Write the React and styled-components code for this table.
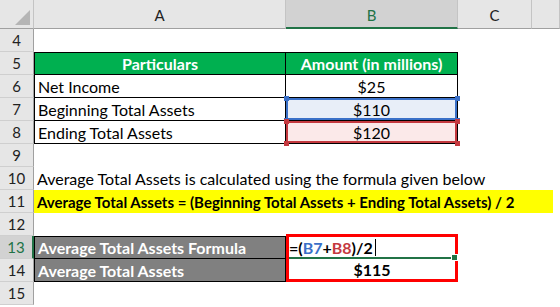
import styled, { createGlobalStyle } from 'styled-components';

const GlobalStyle = createGlobalStyle`
  html, body {
    margin: 0;
    padding: 0;
    background: #ffffff;
  }
  body {
    font-family: Lato, "Open Sans", "Liberation Sans", sans-serif;
    font-size: 16px;
    color: #000;
  }
`;

const Sheet = styled.div`
  display: grid;
  grid-template-columns: 34px 252px 172px 74px 1fr;
  grid-template-rows: 29px repeat(12, 23px);
  width: 560px;
  height: 307px;
  overflow: hidden;
  background: #fff;
`;

const Corner = styled.div`
  background: #e6e6e6;
  border-right: 1px solid #c4c4c4;
  border-bottom: 1px solid #a0a0a0;
  display: flex;
  align-items: flex-end;
  justify-content: flex-end;
  padding: 0 3px 3px 0;
  box-sizing: border-box;
`;

const ColHead = styled.div`
  background: ${(p) => (p.$active ? '#d2d2d2' : '#e6e6e6')};
  color: ${(p) => (p.$active ? '#217346' : '#222')};
  border-right: 1px solid #c4c4c4;
  border-bottom: ${(p) => (p.$active ? '2px solid #217346' : '1px solid #a0a0a0')};
  display: flex;
  align-items: center;
  justify-content: center;
  padding-top: 2px;
  box-sizing: border-box;
  font-size: 15px;
`;

const RowHead = styled.div`
  grid-column: 1;
  background: ${(p) => (p.$active ? '#d2d2d2' : '#e6e6e6')};
  color: ${(p) => (p.$active ? '#217346' : '#222')};
  border-right: ${(p) => (p.$active ? '2px solid #217346' : '1px solid #a0a0a0')};
  border-bottom: 1px solid #cfcfcf;
  display: flex;
  align-items: center;
  justify-content: center;
  box-sizing: border-box;
  font-size: 15px;
`;

const Cell = styled.div`
  grid-column: ${(p) => p.$col || 'auto'};
  background: ${(p) => p.$bg || 'transparent'};
  color: ${(p) => p.$color || '#000'};
  font-weight: ${(p) => (p.$bold ? 700 : 400)};
  font-size: ${(p) => p.$size || 16}px;
  display: flex;
  align-items: center;
  justify-content: ${(p) => (p.$center ? 'center' : 'flex-start')};
  padding: 0 3px;
  white-space: nowrap;
  box-sizing: border-box;
  position: relative;
  ${(p) =>
    p.$boxed &&
    `
    border-right: 1px solid #000;
    border-bottom: 1px solid #000;
  `}
  ${(p) => p.$top && 'border-top: 1px solid #000;'}
  ${(p) => p.$left && 'border-left: 1px solid #000;'}
  ${(p) => p.$trim && `margin-right: ${p.$trim}px;`}
`;

const RefCell = styled(Cell)`
  background: ${(p) => p.$tint};
  box-shadow: inset 0 0 0 2px ${(p) => p.$ring};
  border-right: 1px solid #000;
  border-bottom: 1px solid #000;
`;

const Handle = styled.span`
  position: absolute;
  width: 5px;
  height: 5px;
  background: ${(p) => p.$ring};
  ${(p) => (p.$y === 'top' ? 'top: -2px;' : 'bottom: -3px;')}
  ${(p) => (p.$x === 'left' ? 'left: -2px;' : 'right: -3px;')}
`;

const FormulaBox = styled.div`
  grid-column: 3;
  grid-row: 11 / 13;
  margin: -2px 0 0 0;
  border: 3px solid #ff0000;
  display: flex;
  flex-direction: column;
  box-sizing: border-box;
  font-weight: 700;
  font-size: 16px;
`;

const EditRow = styled.div`
  flex: 1;
  display: flex;
  align-items: center;
  border-bottom: 2px solid #217346;
  margin-right: 2px;
  position: relative;
`;

const FillHandle = styled.span`
  position: absolute;
  right: -5px;
  bottom: -4px;
  width: 5px;
  height: 5px;
  background: #217346;
  border: 1px solid #fff;
`;

const ResultRow = styled.div`
  flex: 1;
  display: flex;
  align-items: center;
  justify-content: center;
`;

const Ref = styled.span`
  color: ${(p) => p.$c};
`;

const Caret = styled.span`
  display: inline-block;
  width: 1px;
  height: 17px;
  background: #000;
  margin-left: 2px;
`;

const GREEN = '#00b050';
const GREY = '#808080';
const BLUE = '#3a70c8';
const RED = '#c4393f';

const rows = [4, 5, 6, 7, 8, 9, 10, 11, 12, 13, 14, 15];

export default function App() {
  return (
    <>
      <GlobalStyle />
      <Sheet>
        <Corner>
          <svg width="15" height="15" viewBox="0 0 15 15">
            <polygon points="0,15 15,15 15,0" fill="#b5b5b5" />
          </svg>
        </Corner>
        <ColHead>A</ColHead>
        <ColHead $active>B</ColHead>
        <ColHead>C</ColHead>
        <ColHead />

        {rows.map((r) => (
          <RowHead key={r} $active={r === 13} style={{ gridRow: r - 2 }}>
            {r}
          </RowHead>
        ))}

        {/* row 4 */}
        <Cell $col="2 / -1" style={{ gridRow: 2 }} />

        {/* row 5 */}
        <Cell $col="2" $bg={GREEN} $color="#fff" $bold $center $boxed $top $left>
          Particulars
        </Cell>
        <Cell $col="3" $bg={GREEN} $color="#fff" $bold $center $boxed $top>
          Amount (in millions)
        </Cell>
        <Cell $col="4 / -1" />

        {/* row 6 */}
        <Cell $col="2" $boxed $left>Net Income</Cell>
        <Cell $col="3" $center $boxed>$25</Cell>
        <Cell $col="4 / -1" />

        {/* row 7 */}
        <Cell $col="2" $boxed $left>Beginning Total Assets</Cell>
        <RefCell $col="3" $center $tint="#e8eef8" $ring={BLUE}>
          $110
          <Handle $ring={BLUE} $x="left" $y="top" />
          <Handle $ring={BLUE} $x="right" $y="top" />
          <Handle $ring={BLUE} $x="left" $y="bottom" />
          <Handle $ring={BLUE} $x="right" $y="bottom" />
        </RefCell>
        <Cell $col="4 / -1" />

        {/* row 8 */}
        <Cell $col="2" $boxed $left>Ending Total Assets</Cell>
        <RefCell $col="3" $center $tint="#fbe9e9" $ring={RED}>
          $120
          <Handle $ring={RED} $x="left" $y="top" />
          <Handle $ring={RED} $x="right" $y="top" />
          <Handle $ring={RED} $x="left" $y="bottom" />
          <Handle $ring={RED} $x="right" $y="bottom" />
        </RefCell>
        <Cell $col="4 / -1" />

        {/* row 9 */}
        <Cell $col="2 / -1" />

        {/* row 10 */}
        <Cell $col="2 / -1">Average Total Assets is calculated using the formula given below</Cell>

        {/* row 11 */}
        <Cell $col="2 / -1" $bg="#ffff00" $bold $size={15} $trim={7}>
          Average Total Assets = (Beginning Total Assets + Ending Total Assets) / 2
        </Cell>

        {/* row 12 */}
        <Cell $col="2 / -1" style={{ gridRow: 10 }} />

        {/* rows 13 - 14 */}
        <Cell $col="2" $bg={GREY} $color="#fff" $bold $boxed $top $left style={{ gridRow: 11 }}>
          Average Total Assets Formula
        </Cell>
        <Cell $col="2" $bg={GREY} $color="#fff" $bold $boxed $left style={{ gridRow: 12 }}>
          Average Total Assets
        </Cell>
        <FormulaBox>
          <EditRow>
            =(<Ref $c={BLUE}>B7</Ref>+<Ref $c={RED}>B8</Ref>)/2
            <Caret />
            <FillHandle />
          </EditRow>
          <ResultRow>$115</ResultRow>
        </FormulaBox>
      </Sheet>
    </>
  );
}
